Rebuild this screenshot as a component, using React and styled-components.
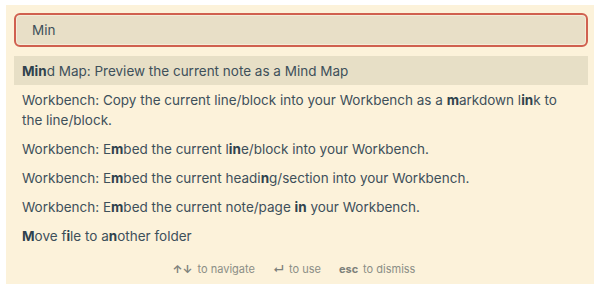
import React from "react"
import styled, { createGlobalStyle } from "styled-components"

const GlobalStyle = createGlobalStyle`
  html, body {
    margin: 0;
    padding: 0;
    background: #ffffff;
  }
  body {
    font-family: Inter, "Noto Sans", sans-serif;
  }
`

const Palette = styled.div`
  margin: 5px 6px 0 6px;
  height: 279px;
  box-sizing: border-box;
  background-color: #fcf2da;
  padding: 8px 6px 0 8px;
  display: flex;
  flex-direction: column;
`

const SearchInput = styled.div`
  height: 34px;
  box-sizing: border-box;
  border: 2px solid #d0604f;
  box-shadow: inset 0 0 0 1px #f4ecd8;
  border-radius: 6px;
  background-color: #e8dfc7;
  display: flex;
  align-items: center;
  padding-left: 16px;
  font-size: 13.5px;
  color: #3e505a;
`

const Results = styled.div`
  margin-top: 9px;
  display: flex;
  flex-direction: column;
`

const Item = styled.div`
  padding: 4.5px 8px;
  line-height: 20px;
  font-size: 13.5px;
  color: #3e505a;
  background-color: ${p => (p.$selected ? "#e7dfc6" : "transparent")};
`

const Match = styled.b`
  font-weight: 700;
  color: #2f424d;
`

const Footer = styled.div`
  flex: 1;
  display: flex;
  justify-content: center;
  align-items: center;
  gap: 18px;
  font-size: 11px;
  color: #8b8e86;
  padding: 3px 14px 0 0;
`

const Hint = styled.span`
  display: inline-flex;
  align-items: center;
  gap: 5px;
`

const Key = styled.span`
  font-weight: 700;
  color: #7d817a;
`

const items = [
  "**Min**d Map: Preview the current note as a Mind Map",
  "Workbench: Copy the current line/block into your Workbench as a **m**arkdown l**in**k to the line/block.",
  "Workbench: E**m**bed the current l**in**e/block into your Workbench.",
  "Workbench: E**m**bed the current headi**n**g/section into your Workbench.",
  "Workbench: E**m**bed the current note/page **in** your Workbench.",
  "**M**ove f**i**le to a**n**other folder",
]

const renderText = text =>
  text.split("**").map((part, i) =>
    i % 2 === 1 ? <Match key={i}>{part}</Match> : <React.Fragment key={i}>{part}</React.Fragment>
  )

const App = () => {
  return (
    <>
      <GlobalStyle />
      <Palette>
        <SearchInput>Min</SearchInput>
        <Results>
          {items.map((text, i) => (
            <Item key={i} $selected={i === 0}>
              {renderText(text)}
            </Item>
          ))}
        </Results>
        <Footer>
          <Hint>
            <Key>↑↓</Key> to navigate
          </Hint>
          <Hint>
            <Key>↵</Key> to use
          </Hint>
          <Hint>
            <Key>esc</Key> to dismiss
          </Hint>
        </Footer>
      </Palette>
    </>
  )
}

export default App
